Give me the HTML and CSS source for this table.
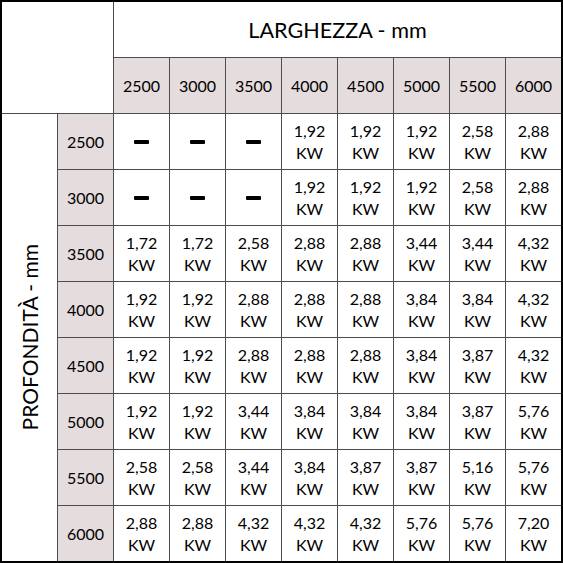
FILE: index.html
```html
<!DOCTYPE html>
<html lang="it">
<head>
<meta charset="utf-8">
<title>Tabella potenze</title>
<link rel="stylesheet" href="styles.css">
</head>
<body>
<div class="table">
  <div class="corner"></div>
  <div class="title">LARGHEZZA - mm</div>
  <div class="head">2500</div><div class="head">3000</div><div class="head">3500</div><div class="head">4000</div><div class="head">4500</div><div class="head">5000</div><div class="head">5500</div><div class="head">6000</div>
  <div class="side"><span class="side-text">PROFONDITÀ - mm</span></div>

  <div class="rowhead">2500</div>
  <div class="cell"><span class="dash"></span></div><div class="cell"><span class="dash"></span></div><div class="cell"><span class="dash"></span></div>
  <div class="cell">1,92<br>KW</div><div class="cell">1,92<br>KW</div><div class="cell">1,92<br>KW</div><div class="cell">2,58<br>KW</div><div class="cell">2,88<br>KW</div>

  <div class="rowhead">3000</div>
  <div class="cell"><span class="dash"></span></div><div class="cell"><span class="dash"></span></div><div class="cell"><span class="dash"></span></div>
  <div class="cell">1,92<br>KW</div><div class="cell">1,92<br>KW</div><div class="cell">1,92<br>KW</div><div class="cell">2,58<br>KW</div><div class="cell">2,88<br>KW</div>

  <div class="rowhead">3500</div>
  <div class="cell">1,72<br>KW</div><div class="cell">1,72<br>KW</div><div class="cell">2,58<br>KW</div><div class="cell">2,88<br>KW</div><div class="cell">2,88<br>KW</div><div class="cell">3,44<br>KW</div><div class="cell">3,44<br>KW</div><div class="cell">4,32<br>KW</div>

  <div class="rowhead">4000</div>
  <div class="cell">1,92<br>KW</div><div class="cell">1,92<br>KW</div><div class="cell">2,88<br>KW</div><div class="cell">2,88<br>KW</div><div class="cell">2,88<br>KW</div><div class="cell">3,84<br>KW</div><div class="cell">3,84<br>KW</div><div class="cell">4,32<br>KW</div>

  <div class="rowhead">4500</div>
  <div class="cell">1,92<br>KW</div><div class="cell">1,92<br>KW</div><div class="cell">2,88<br>KW</div><div class="cell">2,88<br>KW</div><div class="cell">2,88<br>KW</div><div class="cell">3,84<br>KW</div><div class="cell">3,87<br>KW</div><div class="cell">4,32<br>KW</div>

  <div class="rowhead">5000</div>
  <div class="cell">1,92<br>KW</div><div class="cell">1,92<br>KW</div><div class="cell">3,44<br>KW</div><div class="cell">3,84<br>KW</div><div class="cell">3,84<br>KW</div><div class="cell">3,84<br>KW</div><div class="cell">3,87<br>KW</div><div class="cell">5,76<br>KW</div>

  <div class="rowhead">5500</div>
  <div class="cell">2,58<br>KW</div><div class="cell">2,58<br>KW</div><div class="cell">3,44<br>KW</div><div class="cell">3,84<br>KW</div><div class="cell">3,87<br>KW</div><div class="cell">3,87<br>KW</div><div class="cell">5,16<br>KW</div><div class="cell">5,76<br>KW</div>

  <div class="rowhead">6000</div>
  <div class="cell">2,88<br>KW</div><div class="cell">2,88<br>KW</div><div class="cell">4,32<br>KW</div><div class="cell">4,32<br>KW</div><div class="cell">4,32<br>KW</div><div class="cell">5,76<br>KW</div><div class="cell">5,76<br>KW</div><div class="cell">7,20<br>KW</div>
</div>
</body>
</html>
```

FILE: styles.css
```css
html, body {
  margin: 0;
  padding: 0;
  background: #ffffff;
}

.table {
  box-sizing: border-box;
  width: 563px;
  height: 563px;
  border: 2px solid #000;
  background: #4d4d4d;
  display: grid;
  grid-template-columns: repeat(10, 1fr);
  grid-template-rows: repeat(10, 1fr);
  gap: 1px;
  font-family: Lato, "Open Sans", sans-serif;
  font-size: 16px;
  color: #000;
}

.table > div {
  background: #fff;
  display: flex;
  align-items: center;
  justify-content: center;
  text-align: center;
}

.corner {
  grid-column: 1 / 3;
  grid-row: 1 / 3;
}

.title {
  grid-column: 3 / 11;
  grid-row: 1;
  font-size: 21.6px;
}

.table > .head,
.table > .rowhead {
  background: #e4dcdd;
}

.side {
  grid-column: 1;
  grid-row: 3 / 11;
}

.side-text {
  writing-mode: vertical-rl;
  transform: rotate(180deg);
  font-size: 21px;
  white-space: nowrap;
}

.rowhead {
  grid-column: 2;
}

.cell {
  line-height: 22px;
}

.dash {
  display: block;
  width: 15px;
  height: 4px;
  background: #000;
  border-radius: 1px;
}
```
